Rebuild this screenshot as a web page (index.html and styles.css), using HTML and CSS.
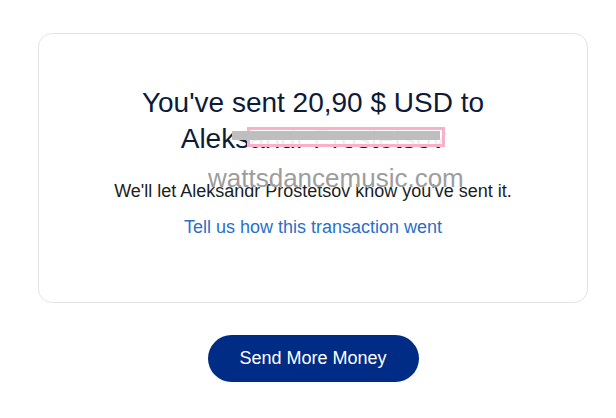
FILE: index.html
```html
<!DOCTYPE html>
<html lang="en">
<head>
<meta charset="utf-8">
<title>Payment sent</title>
<link rel="stylesheet" href="styles.css">
</head>
<body>
<main class="page">
  <section class="card">
    <h1 class="title">You've sent 20,90 $ USD to Aleksandr Prostetsov</h1>
    <p class="note">We'll let Aleksandr Prostetsov know you've sent it.</p>
    <a class="link" href="#">Tell us how this transaction went</a>
    <span class="redact-box"></span>
    <span class="redact-bar"></span>
    <span class="watermark">wattsdancemusic.com</span>
  </section>
  <div class="actions">
    <a class="btn" href="#">Send More Money</a>
  </div>
</main>
</body>
</html>
```
FILE: styles.css
```css
html, body {
  margin: 0;
  padding: 0;
  background: #ffffff;
}
body {
  font-family: "Liberation Sans", Arial, sans-serif;
}
.page {
  width: 550px;
  padding: 33px 0 0 38px;
}
.card {
  position: relative;
  box-sizing: border-box;
  width: 550px;
  height: 270px;
  border: 1px solid #e3e3e3;
  border-radius: 14px;
  padding: 51px 40px 0;
  display: flex;
  flex-direction: column;
  align-items: center;
  text-align: center;
}
.title {
  margin: 0;
  width: 440px;
  font-size: 28px;
  font-weight: 400;
  line-height: 36px;
  color: #0d1b36;
}
.note {
  margin: 22px 0 0;
  font-size: 18px;
  line-height: 24px;
  color: #1b1d24;
}
.link {
  margin-top: 12px;
  font-size: 18px;
  line-height: 24px;
  color: #2a6fc8;
  text-decoration: none;
}
.redact-box {
  position: absolute;
  left: 208px;
  top: 93px;
  width: 198px;
  height: 20px;
  box-sizing: border-box;
  border: 3px solid #f7b1c9;
  background: rgba(255, 255, 255, 0.93);
}
.redact-bar {
  position: absolute;
  left: 193px;
  top: 97px;
  width: 208px;
  height: 9px;
  background: #bebebe;
}
.watermark {
  position: absolute;
  left: 169px;
  top: 131px;
  font-size: 26px;
  line-height: 26px;
  color: #9d9d9d;
  text-shadow: 0 0 1px #ffffff, 0 0 1px #ffffff;
  white-space: nowrap;
}
.actions {
  display: flex;
  justify-content: center;
  margin-top: 32px;
}
.btn {
  display: flex;
  align-items: center;
  justify-content: center;
  width: 211px;
  height: 47px;
  border-radius: 24px;
  background: #012c86;
  color: #ffffff;
  font-size: 18px;
  text-decoration: none;
}
```
